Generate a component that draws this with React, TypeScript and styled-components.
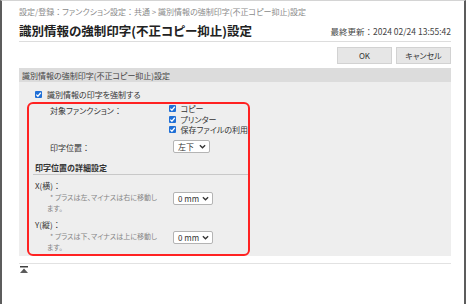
import React from "react";
import { createGlobalStyle, styled } from "styled-components";

const GlobalStyle = createGlobalStyle`
  body {
    margin: 0;
    background: #ffffff;
    font-family: "Noto Sans CJK JP", "Noto Sans", sans-serif;
    font-feature-settings: "palt";
    color: #333333;
  }
`;

const Check = () => (
  <CheckBox>
    <svg width="7" height="7" viewBox="0 0 8 8">
      <path d="M1.5 4.2 L3.3 6 L6.6 2" fill="none" stroke="#fff" strokeWidth="1.4" />
    </svg>
  </CheckBox>
);

const Chevron = () => (
  <svg width="7" height="5" viewBox="0 0 8 5">
    <path d="M1 1 L4 4 L7 1" fill="none" stroke="#333" strokeWidth="1.5" />
  </svg>
);

const App = () => {
  return (
    <>
      <GlobalStyle />
      <Frame>
        <Breadcrumb>
          設定/登録<Colon>：</Colon>ファンクション設定<Colon>：</Colon>共通 &gt; 識別情報の強制印字(不正コピー抑止)設定
        </Breadcrumb>
        <TitleRow>
          <Title>識別情報の強制印字(不正コピー抑止)設定</Title>
          <Updated>
            最終更新<Colon>：</Colon>2024 02/24 13:55:42
          </Updated>
        </TitleRow>
        <ButtonRow>
          <Button>OK</Button>
          <Button>キャンセル</Button>
        </ButtonRow>

        <Panel>
          <PanelHeader>識別情報の強制印字(不正コピー抑止)設定</PanelHeader>
          <PanelBody>
            <CheckRow>
              <Check />
              識別情報の印字を強制する
            </CheckRow>

            <Highlight>
              <FieldRow>
                <FieldLabel>
                  対象ファンクション<Colon>：</Colon>
                </FieldLabel>
                <CheckList>
                  <CheckRow>
                    <Check />
                    コピー
                  </CheckRow>
                  <CheckRow>
                    <Check />
                    プリンター
                  </CheckRow>
                  <CheckRow>
                    <Check />
                    保存ファイルの利用
                  </CheckRow>
                </CheckList>
              </FieldRow>
              <FieldRow $center>
                <FieldLabel>
                  印字位置<Colon>：</Colon>
                </FieldLabel>
                <Select $width={37}>
                  左下
                  <Chevron />
                </Select>
              </FieldRow>

              <SubHeading>印字位置の詳細設定</SubHeading>

              <DetailItem>
                <DetailLabel>
                  X(横)<Colon>：</Colon>
                </DetailLabel>
                <DetailRow>
                  <Note>
                    * プラスは左、マイナスは右に移動し
                    <br />
                    ます。
                  </Note>
                  <Select $width={40}>
                    0 mm
                    <Chevron />
                  </Select>
                </DetailRow>
              </DetailItem>
              <DetailItem>
                <DetailLabel>
                  Y(縦)<Colon>：</Colon>
                </DetailLabel>
                <DetailRow>
                  <Note>
                    * プラスは下、マイナスは上に移動し
                    <br />
                    ます。
                  </Note>
                  <Select $width={40}>
                    0 mm
                    <Chevron />
                  </Select>
                </DetailRow>
              </DetailItem>
            </Highlight>
          </PanelBody>
        </Panel>

        <Footer>
          <ToTop>
            <svg width="8" height="7" viewBox="0 0 8 7">
              <rect x="0" y="0" width="8" height="1.5" fill="#333" />
              <path d="M4 2.5 L8 7 L0 7 Z" fill="#333" />
            </svg>
          </ToTop>
        </Footer>
      </Frame>
    </>
  );
};

const Frame = styled.div`
  position: relative;
  box-sizing: border-box;
  width: 466px;
  height: 304px;
  overflow: hidden;
  border-left: 2px solid #5c5c5c;
  border-right: 2px solid #5c5c5c;
  border-top: 1px solid #d4d4d4;
  padding: 5px 13px 0 17px;
  background: #ffffff;

  &::after {
    content: "";
    position: absolute;
    left: -2px;
    right: -2px;
    bottom: 0;
    height: 40px;
    background: linear-gradient(rgba(255, 255, 255, 0), #ffffff);
  }
`;

const Colon = styled.span`
  font-feature-settings: normal;
`;

const Breadcrumb = styled.div`
  font-size: 8px;
  line-height: 11px;
  color: #8a8a8a;
  white-space: nowrap;
`;

const TitleRow = styled.div`
  display: flex;
  align-items: center;
  justify-content: space-between;
  margin-top: 4px;
  height: 19px;
  border-bottom: 1px solid #dddddd;
  padding-bottom: 1px;
`;

const Title = styled.h1`
  margin: 0;
  font-size: 12.5px;
  font-weight: 700;
  color: #222222;
  white-space: nowrap;
`;

const Updated = styled.div`
  font-size: 8.5px;
  color: #444444;
  white-space: nowrap;
`;

const ButtonRow = styled.div`
  display: flex;
  justify-content: flex-end;
  gap: 4px;
  margin-top: 5px;
`;

const Button = styled.div`
  box-sizing: border-box;
  width: 55px;
  height: 17px;
  display: flex;
  align-items: center;
  justify-content: center;
  font-size: 8px;
  color: #333333;
  background: #e6e6e6;
  border: 1px solid #d2d2d2;
`;

const Panel = styled.div`
  margin-top: 4px;
  background: #eeeeee;
`;

const PanelHeader = styled.div`
  height: 14px;
  display: flex;
  align-items: center;
  padding-left: 3px;
  font-size: 8px;
  color: #444444;
  background: #dcdcdc;
  white-space: nowrap;
`;

const PanelBody = styled.div`
  padding: 7px 0 0 8px;
`;

const CheckRow = styled.div`
  display: flex;
  align-items: center;
  gap: 5px;
  height: 10.5px;
  font-size: 8px;
  color: #333333;
  white-space: nowrap;
  padding-left: 8px;
`;

const CheckBox = styled.span`
  flex: none;
  width: 7px;
  height: 7px;
  display: flex;
  align-items: center;
  justify-content: center;
  border-radius: 1px;
  background: #1f6fd6;
`;

const Highlight = styled.div`
  box-sizing: border-box;
  width: 223px;
  margin-top: 2px;
  padding: 0 0 2px 0;
  border: 2px solid #ff2222;
  border-radius: 6px;
`;

const FieldRow = styled.div<{ $center?: boolean }>`
  display: flex;
  align-items: ${(p) => (p.$center ? "center" : "flex-start")};
  padding-left: 21px;
  margin-top: ${(p) => (p.$center ? "5px" : "0")};
`;

const FieldLabel = styled.div`
  width: 123px;
  font-size: 8px;
  line-height: 10px;
  padding-top: 2px;
  color: #333333;
  white-space: nowrap;

  ${FieldRow}:last-of-type & {
    padding-top: 0;
  }
`;

const CheckList = styled.div`
  display: flex;
  flex-direction: column;

  ${CheckRow} {
    padding-left: 0;
  }
`;

const Select = styled.div<{ $width: number }>`
  box-sizing: border-box;
  width: ${(p) => p.$width}px;
  height: 13px;
  display: flex;
  align-items: center;
  justify-content: space-between;
  padding: 0 3px 0 4px;
  font-size: 8px;
  color: #333333;
  background: #ffffff;
  border: 1px solid #b4b4b4;
  border-radius: 2px;
  white-space: nowrap;
`;

const SubHeading = styled.div`
  margin: 9px 0 0 4px;
  padding: 0 0 1px 2px;
  font-size: 8px;
  font-weight: 700;
  line-height: 11px;
  color: #333333;
  border-bottom: 1px solid #c8c8c8;
`;

const DetailItem = styled.div`
  padding-left: 6px;
  margin-top: 6px;

  & + & {
    margin-top: 7px;
  }
`;

const DetailLabel = styled.div`
  font-size: 8px;
  line-height: 10px;
  color: #333333;
`;

const DetailRow = styled.div`
  display: flex;
  align-items: flex-start;
  margin-top: 1px;
`;

const Note = styled.div`
  width: 126px;
  padding-left: 12px;
  font-size: 7px;
  line-height: 10.5px;
  color: #858585;
  white-space: nowrap;
  text-indent: 3px;
`;

const Footer = styled.div`
  margin-top: 7px;
  border-top: 1px solid #e2e2e2;
  padding: 2px 0 0 1px;
`;

const ToTop = styled.div`
  width: 8px;
  height: 7px;
  display: flex;
`;

export default App;
